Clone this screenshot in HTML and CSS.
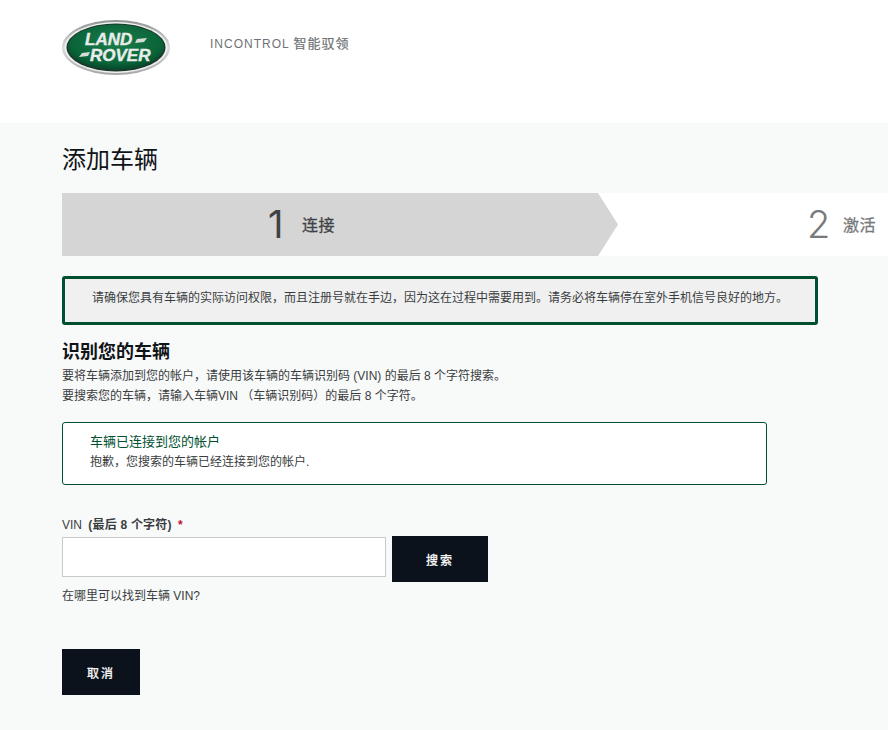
FILE: index.html
```html
<!DOCTYPE html>
<html lang="zh-CN">
<head>
<meta charset="utf-8">
<title>添加车辆</title>
<link rel="stylesheet" href="styles.css">
</head>
<body>
<header class="site-header">
  <svg class="logo" viewBox="0 0 110 58" width="110" height="58" aria-label="Land Rover">
    <defs>
      <linearGradient id="rim" x1="0" y1="0" x2="0" y2="1">
        <stop offset="0" stop-color="#8f9492"/>
        <stop offset="0.5" stop-color="#d9dcdb"/>
        <stop offset="1" stop-color="#a5a8a7"/>
      </linearGradient>
      <radialGradient id="green" cx="0.5" cy="0.4" r="0.65">
        <stop offset="0" stop-color="#1b7d4b"/>
        <stop offset="0.7" stop-color="#0a6539"/>
        <stop offset="1" stop-color="#043f27"/>
      </radialGradient>
    </defs>
    <ellipse cx="55" cy="29.5" rx="54" ry="27.5" fill="url(#rim)"/>
    <ellipse cx="55" cy="29.5" rx="51.5" ry="25.5" fill="#eff1f0"/>
    <ellipse cx="55" cy="29.5" rx="49.5" ry="24" fill="#1c3a2c"/>
    <ellipse cx="55" cy="29" rx="48" ry="22.5" fill="url(#green)"/>
    <text class="logo-text"><tspan x="24" y="27">LAND</tspan> <tspan x="29" y="43">ROVER</tspan></text>
    <polygon class="logo-wing" points="76,21 86,20 83,24 74,25"/>
    <polygon class="logo-wing" points="21,35 29,34 27,38 18,39"/>
  </svg>
  <span class="brand-name">INCONTROL <span class="brand-cjk">智能驭领</span></span>
</header>
<main class="page">
  <h1 class="page-title">添加车辆</h1>
  <div class="steps">
    <div class="step step-active">
      <span class="step-num">1</span>
      <span class="step-label">连接</span>
    </div>
    <div class="step step-next">
      <span class="step-num">2</span>
      <span class="step-label">激活</span>
    </div>
  </div>
  <div class="content">
    <div class="alert">请确保您具有车辆的实际访问权限，而且注册号就在手边，因为这在过程中需要用到。请务必将车辆停在室外手机信号良好的地方。</div>
    <h2 class="section-title">识别您的车辆</h2>
    <p class="intro intro-first">要将车辆添加到您的帐户，请使用该车辆的车辆识别码 (VIN) 的最后 8 个字符搜索。</p>
    <p class="intro">要搜索您的车辆，请输入车辆VIN （车辆识别码）的最后 8 个字符。</p>
    <div class="notice">
      <div class="notice-title">车辆已连接到您的帐户</div>
      <div class="notice-text">抱歉，您搜索的车辆已经连接到您的帐户.</div>
    </div>
    <form class="vin-form">
      <label class="vin-label" for="vin">VIN <b class="vin-hint">(最后 8 个字符)</b> <span class="req">*</span></label>
      <div class="vin-row">
        <input class="vin-input" id="vin" type="text">
        <button class="btn btn-search" type="button">搜索</button>
      </div>
      <a class="vin-help">在哪里可以找到车辆 VIN?</a>
      <button class="btn btn-cancel" type="button">取消</button>
    </form>
  </div>
</main>
</body>
</html>
```

FILE: styles.css
```css
* { box-sizing: border-box; }
html, body { margin: 0; padding: 0; }
body {
  width: 888px;
  height: 730px;
  overflow: hidden;
  background: #f8f9f9;
  color: #3a3d40;
  font-family: "Liberation Sans", "Noto Sans CJK SC", sans-serif;
  font-size: 12px;
}
.site-header {
  height: 123px;
  background: #fff;
  padding: 18px 0 0 61px;
  display: flex;
  align-items: flex-start;
}
.logo { display: block; flex: none; }
.logo-text {
  font-family: "Liberation Sans", sans-serif;
  font-weight: 700;
  font-style: italic;
  font-size: 17px;
  fill: #e9ecea;
  stroke: #e9ecea;
  stroke-width: 0.4px;
}
.logo-wing { fill: #d5dbd7; }
.brand-name {
  margin: 17px 0 0 39px;
  font-size: 12px;
  line-height: 17px;
  letter-spacing: 1px;
  color: #6f7274;
}
.brand-cjk {
  font-size: 13px;
  -webkit-text-stroke: 0.2px #6f7274;
}
.page-title {
  margin: 0;
  padding: 20px 0 0 62px;
  height: 70px;
  font-size: 24px;
  line-height: 33px;
  font-weight: 400;
  color: #101418;
}
.steps {
  height: 63px;
  margin-left: 62px;
  display: flex;
  background: #fff;
}
.step { display: flex; align-items: center; height: 63px; }
.step-active {
  width: 556px;
  padding-left: 206px;
  background: #d5d5d5;
  clip-path: polygon(0 0, 536px 0, 556px 50%, 536px 100%, 0 100%);
}
.step-next { padding-left: 189px; }
.step-num {
  font-family: "Inter", sans-serif;
  font-size: 38px;
  line-height: 63px;
  width: 34px;
  color: #3f4245;
}
.step-active .step-num { font-weight: 400; }
.step-next .step-num { font-weight: 300; width: 36px; }
.step-label {
  padding-bottom: 2px;
  font-size: 16px;
  letter-spacing: 0.5px;
  color: #3f4245;
  -webkit-text-stroke: 0.3px currentColor;
}
.step-next .step-num, .step-next .step-label { color: #77797b; }
.content { padding: 20px 0 0 62px; }
.alert {
  width: 756px;
  height: 49px;
  padding: 0 0 0 27px;
  border: 3px solid #00502f;
  border-radius: 3px;
  background: #f0f0f0;
  font-size: 12px;
  line-height: 38px;
}
.section-title {
  margin: 15px 0 0;
  font-size: 18px;
  line-height: 24px;
  font-weight: 700;
  color: #101418;
}
.intro { margin: 0; font-size: 12px; line-height: 20px; }
.intro-first { margin-top: 2px; }
.notice {
  width: 705px;
  height: 63px;
  margin-top: 16px;
  padding: 9px 0 0 27px;
  background: #fff;
  border: 1px solid #00502f;
  border-radius: 3px;
}
.notice-title { font-size: 13px; line-height: 19px; color: #00502f; }
.notice-text { font-size: 12px; line-height: 23px; }
.vin-form { display: block; padding-top: 31px; }
.vin-label { display: block; font-size: 12px; line-height: 18px; }
.vin-hint { font-weight: 700; margin-left: 3px; letter-spacing: 0.2px; }
.req { color: #c8102e; font-weight: 700; margin-left: 3px; }
.vin-row { display: flex; align-items: flex-start; margin-top: 2px; }
.vin-input {
  width: 324px;
  height: 40px;
  margin-top: 1px;
  background: #fff;
  border: 1px solid #c8c9c9;
  padding: 0 8px;
}
.btn {
  display: block;
  height: 46px;
  border: 0;
  border-radius: 0;
  background: #0c121c;
  color: #fff;
  font-family: inherit;
  font-size: 12px;
  font-weight: 400;
  letter-spacing: 2px;
  -webkit-text-stroke: 0.3px #fff;
}
.btn-search { width: 96px; margin-left: 6px; }
.btn-cancel { width: 78px; margin-top: 44px; }
.vin-help { display: block; margin-top: 5px; line-height: 18px; font-size: 12px; color: #3a3d40; }
```
